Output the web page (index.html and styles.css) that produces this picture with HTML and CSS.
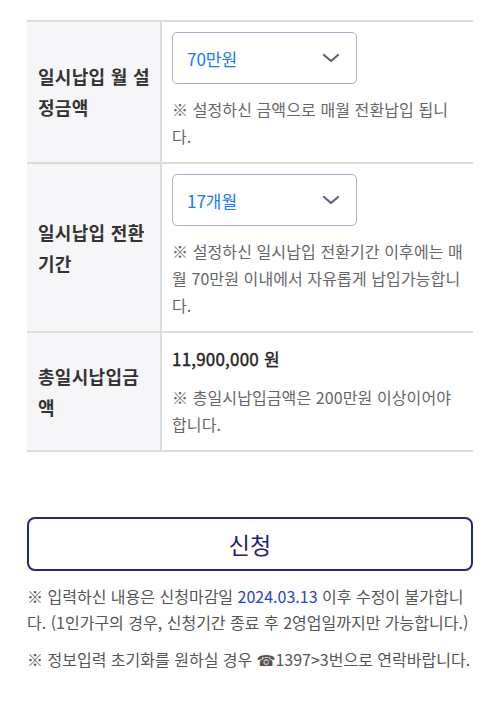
FILE: index.html
```html
<!DOCTYPE html>
<html lang="ko">
<head>
    <meta charset="UTF-8">
    <meta name="viewport" content="width=device-width, initial-scale=1.0">
    <title>일시납입 신청</title>
    <link rel="stylesheet" href="styles.css">
</head>
<body>
    <div class="container">
        <!-- 일시납입 설정 표 -->
        <div class="form-table">
            <div class="row">
                <div class="label">일시납입 월 설<br>정금액</div>
                <div class="cell">
                    <div class="select">
                        <span class="select-value">70만원</span>
                        <svg class="chevron" width="18" height="10" viewBox="0 0 18 10"><path d="M2 2l7 6 7-6" fill="none" stroke="#5b6478" stroke-width="2.2" stroke-linecap="round" stroke-linejoin="round"/></svg>
                    </div>
                    <p class="note">※ 설정하신 금액으로 매월 전환납입 됩니다.</p>
                </div>
            </div>
            <div class="row">
                <div class="label">일시납입 전환<br>기간</div>
                <div class="cell">
                    <div class="select">
                        <span class="select-value">17개월</span>
                        <svg class="chevron" width="18" height="10" viewBox="0 0 18 10"><path d="M2 2l7 6 7-6" fill="none" stroke="#5b6478" stroke-width="2.2" stroke-linecap="round" stroke-linejoin="round"/></svg>
                    </div>
                    <p class="note">※ 설정하신 일시납입 전환기간 이후에는 매월 70만원 이내에서 자유롭게 납입가능합니다.</p>
                </div>
            </div>
            <div class="row">
                <div class="label">총일시납입금<br>액</div>
                <div class="cell">
                    <div class="amount">11,900,000 원</div>
                    <p class="note">※ 총일시납입금액은 200만원 이상이어야 합니다.</p>
                </div>
            </div>
        </div>

        <button class="apply-button" type="button">신청</button>

        <p class="info">※ 입력하신 내용은 신청마감일 <span class="date">2024.03.13</span> 이후 수정이 불가합니다. (1인가구의 경우, 신청기간 종료 후 2영업일까지만 가능합니다.)</p>
        <p class="info">※ 정보입력 초기화를 원하실 경우 <span class="tel">☎</span>1397&gt;3번으로 연락바랍니다.</p>
    </div>
</body>
</html>
```

FILE: styles.css
```css
body {
    font-family: "Noto Sans CJK KR", "Noto Sans", sans-serif;
    margin: 0;
    padding: 0;
    background-color: #fff;
    color: #222;
}
.container {
    padding: 20px 27px 30px;
}
.form-table {
    border-top: 2px solid #dcdcdc;
}
.row {
    display: flex;
    border-bottom: 2px solid #dcdcdc;
}
.label {
    width: 122px;
    flex-shrink: 0;
    padding: 0 0 0 11px;
    display: flex;
    align-items: center;
    background-color: #f6f6f8;
    border-right: 2px solid #dcdcdc;
    font-size: 18px;
    font-weight: 700;
    line-height: 31px;
    color: #333;
    letter-spacing: 0.3px;
}
.cell {
    flex: 1;
    min-width: 0;
    padding: 10px 9px 12px 10px;
}
.select {
    width: 185px;
    height: 52px;
    box-sizing: border-box;
    border: 1px solid #aab0c8;
    border-radius: 5px;
    display: flex;
    align-items: center;
    justify-content: space-between;
    padding: 0 16px 0 14px;
}
.select-value {
    font-size: 17px;
    color: #1a7bf2;
}
.amount {
    font-size: 17px;
    line-height: 27px;
    color: #222;
    padding-top: 2px;
    letter-spacing: 0.2px;
    -webkit-text-stroke: 0.4px #222;
}
.note {
    margin: 12px 0 0;
    font-size: 16px;
    line-height: 27px;
    color: #666;
    letter-spacing: 0.1px;
}
.apply-button {
    display: block;
    width: 100%;
    height: 54px;
    margin-top: 65px;
    border: 2px solid #23287a;
    border-radius: 8px;
    background-color: #fff;
    color: #1d2270;
    font-family: inherit;
    font-size: 23px;
    cursor: pointer;
}
.info {
    margin: 12px 0 0;
    font-size: 16px;
    line-height: 26px;
    color: #555;
    letter-spacing: 0;
}
.info + .info {
    margin-top: 11px;
}
.date {
    color: #2347c6;
}
.tel {
    font-family: "DejaVu Sans", sans-serif;
    font-size: 15px;
}
```
